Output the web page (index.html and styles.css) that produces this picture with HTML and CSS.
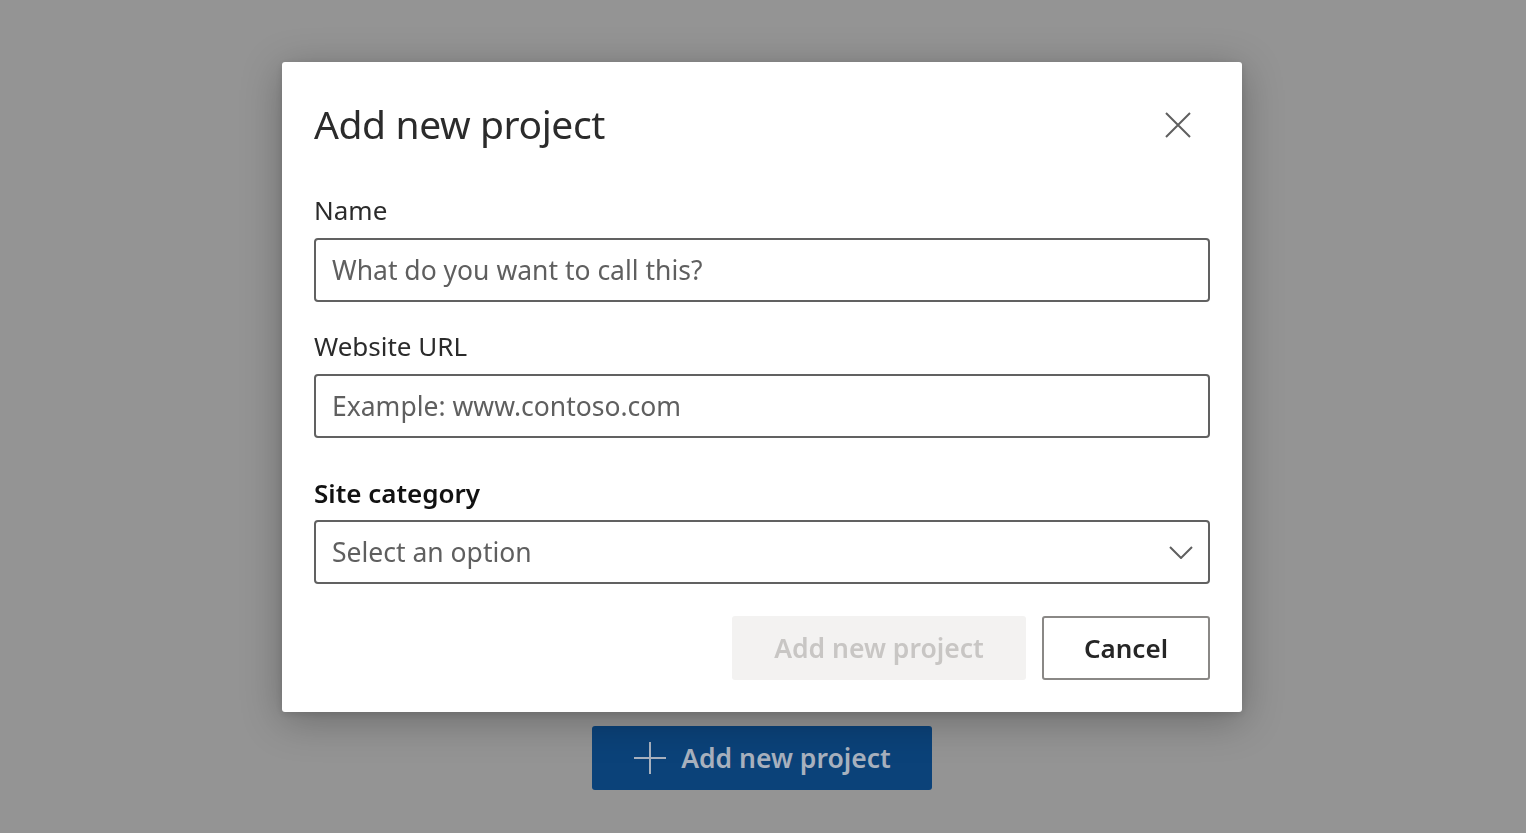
FILE: index.html
```html
<!DOCTYPE html>
<html>
<head>
<meta charset="utf-8">
<link rel="stylesheet" href="styles.css">
</head>
<body>
<main class="page">
  <button class="page-btn"><svg class="plus" viewBox="0 0 34 34" width="34" height="34"><path d="M17 1V33M1 17H33" stroke="currentColor" stroke-width="2" fill="none"/></svg><span>Add new project</span></button>
</main>
<div class="overlay">
  <div class="dialog">
    <div class="dialog-head">
      <h1 class="title">Add new project</h1>
      <button class="close" aria-label="Close"><svg viewBox="0 0 26 26" width="26" height="26"><path d="M1 1L25 25M25 1L1 25" stroke="#5f5f5f" stroke-width="2" fill="none"/></svg></button>
    </div>
    <label class="label">Name</label>
    <div class="field"><span class="placeholder">What do you want to call this?</span></div>
    <label class="label">Website URL</label>
    <div class="field"><span class="placeholder">Example: www.contoso.com</span></div>
    <label class="label label-bold">Site category</label>
    <div class="field select"><span class="placeholder">Select an option</span><svg viewBox="0 0 24 13" width="24" height="13"><path d="M1 1L12 12L23 1" stroke="#5f5f5f" stroke-width="2" fill="none"/></svg></div>
    <div class="actions">
      <button class="btn btn-disabled">Add new project</button>
      <button class="btn btn-cancel">Cancel</button>
    </div>
  </div>
</div>
</body>
</html>
```
FILE: styles.css
```css
* { box-sizing: border-box; }
html, body { margin: 0; height: 100%; }
body {
  background: #949494;
  font-family: "Noto Sans", "Open Sans", sans-serif;
  overflow: hidden;
}
.page {
  display: flex;
  justify-content: center;
  padding-top: 726px;
}
.page-btn {
  width: 340px;
  height: 64px;
  margin-left: -2px;
  background: #0b4279;
  border: none;
  border-radius: 3px;
  color: #a8b1be;
  display: flex;
  align-items: center;
  justify-content: center;
  gap: 14px;
  font-family: inherit;
  font-size: 26.5px;
  font-weight: 600;
  padding: 0;
}
.plus { color: #a8b1be; }
.overlay {
  position: fixed;
  inset: 0;
  display: flex;
  justify-content: center;
  align-items: flex-start;
  padding-top: 62px;
}
.dialog {
  width: 960px;
  height: 650px;
  margin-left: -2px;
  background: #fff;
  border-radius: 3px;
  box-shadow: 0 8px 40px rgba(0,0,0,0.28), 0 2px 8px rgba(0,0,0,0.12);
  padding: 0 32px;
  display: flex;
  flex-direction: column;
}
.dialog > * { flex-shrink: 0; }
.dialog-head {
  display: flex;
  justify-content: space-between;
  align-items: center;
  height: 126px;
}
.title {
  margin: 0 0 4px;
  font-size: 39px;
  font-weight: 400;
  color: #2b2b2b;
  letter-spacing: -0.4px;
}
.close {
  background: none;
  border: none;
  padding: 0;
  margin-right: 19px;
  width: 26px;
  height: 26px;
  display: flex;
}
.label {
  font-size: 26px;
  color: #2b2b2b;
  line-height: 34px;
  margin: 5px 0 11px;
}
.label-bold {
  font-weight: 600;
  color: #111;
  margin: 38px 0 10px;
}
.field {
  height: 64px;
  border: 2px solid #616161;
  border-radius: 4px;
  display: flex;
  align-items: center;
  padding: 0 16px;
}
.field + .label { margin-top: 27px; }
.field + .label-bold { margin-top: 38px; }
.placeholder {
  font-size: 26.5px;
  color: #5f5f5f;
}
.select {
  justify-content: space-between;
  margin-bottom: 32px;
}
.select svg { margin-right: -1px; }
.actions {
  display: flex;
  justify-content: flex-end;
  gap: 16px;
}
.btn {
  height: 64px;
  border-radius: 3px;
  font-family: inherit;
  font-size: 26.5px;
  font-weight: 600;
  padding: 0;
}
.btn-disabled {
  width: 294px;
  background: #f3f2f1;
  border: none;
  color: #c8c6c4;
}
.btn-cancel {
  width: 168px;
  background: #fff;
  border: 2px solid #8a8886;
  color: #262626;
  font-size: 26px;
}
```
